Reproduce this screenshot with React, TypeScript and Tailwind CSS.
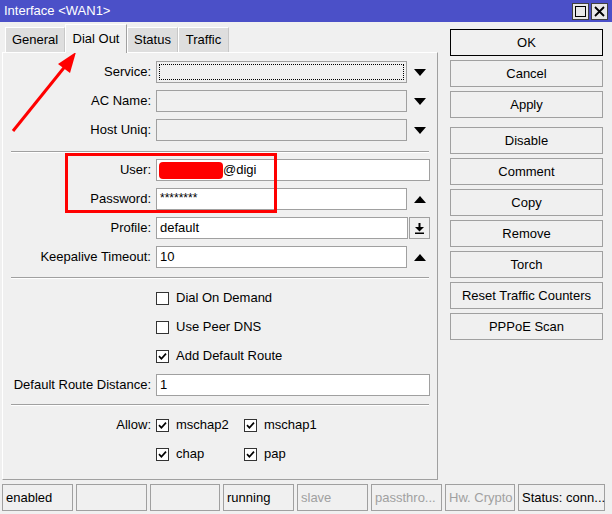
import React from 'react';

function Triangle({ up }: { up?: boolean }) {
  return up ? (
    <div className="h-0 w-0 border-x-[6px] border-b-[7px] border-x-transparent border-b-black" />
  ) : (
    <div className="h-0 w-0 border-x-[6px] border-t-[7px] border-x-transparent border-t-black" />
  );
}

function Check({ checked }: { checked?: boolean }) {
  return (
    <div className="flex h-[13px] w-[13px] shrink-0 items-center justify-center border border-[#333333] bg-white">
      {checked && (
        <svg width="9" height="9" viewBox="0 0 9 9">
          <path d="M1 4.2 L3.4 6.8 L8 1.6" fill="none" stroke="black" strokeWidth="1.7" />
        </svg>
      )}
    </div>
  );
}

function Row({ label, children }: { label?: string; children: React.ReactNode }) {
  return (
    <div className="flex h-[22px] items-center">
      <div className="w-[148px] shrink-0 whitespace-nowrap text-right">{label}</div>
      <div className="ml-[5px] flex items-center">{children}</div>
    </div>
  );
}

function Separator() {
  return <div className="ml-[8px] h-[2px] w-[418px] border-t border-b border-t-[#a0a0a0] border-b-white" />;
}

function CheckItem({ label, checked, w }: { label: string; checked?: boolean; w?: string }) {
  return (
    <div className={`flex items-center gap-[7px] ${w ?? ''}`}>
      <Check checked={checked} />
      <span>{label}</span>
    </div>
  );
}

const buttons = [
  'OK',
  'Cancel',
  'Apply',
  'Disable',
  'Comment',
  'Copy',
  'Remove',
  'Torch',
  'Reset Traffic Counters',
  'PPPoE Scan',
];

const statusCells = [
  { text: 'enabled', w: 'w-[71px]', tone: 'text-black' },
  { text: '', w: 'w-[71px]', tone: 'text-black' },
  { text: '', w: 'w-[70px]', tone: 'text-black' },
  { text: 'running', w: 'w-[71px]', tone: 'text-black' },
  { text: 'slave', w: 'w-[71px]', tone: 'text-[#a0a0a0]' },
  { text: 'passthro...', w: 'w-[71px]', tone: 'text-[#a0a0a0]' },
  { text: 'Hw. Crypto', w: 'w-[70px]', tone: 'text-[#a0a0a0]' },
  { text: 'Status: conn...', w: 'w-[87px]', tone: 'text-black' },
];

export default function App() {
  return (
    <div className="relative h-[514px] w-[612px] overflow-hidden bg-[#f0f0f0] font-['Liberation_Sans',Arial,sans-serif] text-[13px] leading-[16px] text-black">
      {/* title bar */}
      <div className="flex h-[22px] items-center bg-[#4b50c8] pl-[4px] pr-[4px]">
        <span className="text-white">{'Interface <WAN1>'}</span>
        <div className="ml-auto flex gap-[2px]">
          <div className="flex h-[17px] w-[17px] items-center justify-center border border-[#404040] bg-[#e8e8e8]">
            <div className="h-[11px] w-[11px] border-[1.5px] border-black" />
          </div>
          <div className="flex h-[17px] w-[17px] items-center justify-center border border-[#404040] bg-[#e8e8e8]">
            <svg width="11" height="11" viewBox="0 0 11 11">
              <path d="M1 1 L10 10 M10 1 L1 10" stroke="black" strokeWidth="1.8" />
            </svg>
          </div>
        </div>
      </div>

      <div className="flex">
        {/* left: tabs + panel */}
        <div className="ml-[2px] w-[436px]">
          <div className="ml-[3px] mt-[2px] flex h-[28px] items-end">
            <div className="flex h-[25px] w-[60px] items-center justify-center border border-b-0 border-white border-r-[#c8c8c8] bg-[#dedede]">
              General
            </div>
            <div className="relative z-10 -mb-[1px] flex h-[29px] w-[62px] items-center justify-center border border-b-0 border-white border-r-[#a0a0a0] bg-[#f0f0f0]">
              Dial Out
            </div>
            <div className="flex h-[25px] w-[51px] items-center justify-center border border-b-0 border-white border-r-[#c8c8c8] bg-[#dedede]">
              Status
            </div>
            <div className="flex h-[25px] w-[51px] items-center justify-center border border-b-0 border-white border-r-[#c8c8c8] bg-[#dedede]">
              Traffic
            </div>
          </div>

          <div className="h-[428px] border border-white border-b-[#a0a0a0] border-r-[#a0a0a0] pt-[8px]">
            <div className="flex flex-col gap-[7px]">
              <Row label="Service:">
                <div className="h-[22px] w-[251px] border border-[#a0a0a0] bg-[#f0f0f0] p-[2px]">
                  <div className="h-full w-full border border-dotted border-black" />
                </div>
                <div className="ml-[7px]">
                  <Triangle />
                </div>
              </Row>
              <Row label="AC Name:">
                <div className="h-[22px] w-[251px] border border-[#a0a0a0] bg-[#f0f0f0]" />
                <div className="ml-[7px]">
                  <Triangle />
                </div>
              </Row>
              <Row label="Host Uniq:">
                <div className="h-[22px] w-[251px] border border-[#a0a0a0] bg-[#f0f0f0]" />
                <div className="ml-[7px]">
                  <Triangle />
                </div>
              </Row>
            </div>

            <div className="mb-[6px] mt-[10px]">
              <Separator />
            </div>

            <div className="flex flex-col gap-[7px]">
              <Row label="User:">
                <div className="flex h-[22px] w-[274px] items-center border border-[#a0a0a0] bg-white pl-[2px]">
                  <div className="h-[17px] w-[64px] rounded-[4px] bg-[#ff0000]" />
                  <span>@digi</span>
                </div>
              </Row>
              <Row label="Password:">
                <div className="flex h-[22px] w-[251px] items-start border border-[#a0a0a0] bg-white pl-[3px] pt-[1px]">
                  <span className="text-[12px]">********</span>
                </div>
                <div className="ml-[7px]">
                  <Triangle up />
                </div>
              </Row>
              <Row label="Profile:">
                <div className="flex h-[22px] w-[252px] items-center border border-[#a0a0a0] bg-white pl-[3px]">
                  default
                </div>
                <div className="ml-[1px] flex h-[22px] w-[21px] items-center justify-center border border-[#a0a0a0] bg-[#f0f0f0]">
                  <svg width="9" height="11" viewBox="0 0 9 11">
                    <rect x="3.5" y="0" width="2" height="4" fill="black" />
                    <path d="M0 4 L9 4 L4.5 8.5 Z" fill="black" />
                    <rect x="0" y="9.5" width="9" height="1.5" fill="black" />
                  </svg>
                </div>
              </Row>
              <Row label="Keepalive Timeout:">
                <div className="flex h-[22px] w-[251px] items-center border border-[#a0a0a0] bg-white pl-[3px]">
                  10
                </div>
                <div className="ml-[7px]">
                  <Triangle up />
                </div>
              </Row>
            </div>

            <div className="mb-[8px] mt-[9px]">
              <Separator />
            </div>

            <div className="flex flex-col gap-[7px]">
              <Row>
                <CheckItem label="Dial On Demand" />
              </Row>
              <Row>
                <CheckItem label="Use Peer DNS" />
              </Row>
              <Row>
                <CheckItem label="Add Default Route" checked />
              </Row>
              <Row label="Default Route Distance:">
                <div className="flex h-[22px] w-[274px] items-center border border-[#a0a0a0] bg-white pl-[3px]">
                  1
                </div>
              </Row>
            </div>

            <div className="mb-[8px] mt-[8px]">
              <Separator />
            </div>

            <div className="flex flex-col gap-[7px]">
              <Row label="Allow:">
                <CheckItem label="mschap2" checked w="w-[88px]" />
                <CheckItem label="mschap1" checked />
              </Row>
              <Row>
                <CheckItem label="chap" checked w="w-[88px]" />
                <CheckItem label="pap" checked />
              </Row>
            </div>
          </div>
        </div>

        {/* right: buttons */}
        <div className="ml-[12px] mt-[7px] flex w-[153px] flex-col">
          {buttons.map((b, i) => (
            <div
              key={b}
              className={`flex h-[27px] items-center justify-center border bg-[#f0f0f0] ${
                i === 0 ? 'border-black' : 'border-[#a0a0a0]'
              } ${i === 0 ? '' : i === 3 ? 'mt-[9px]' : 'mt-[4px]'}`}
            >
              {b}
            </div>
          ))}
        </div>
      </div>

      {/* status bar */}
      <div className="ml-[2px] mt-[4px] flex gap-[3px]">
        {statusCells.map((c, i) => (
          <div
            key={i}
            className={`flex h-[27px] items-center whitespace-nowrap border border-[#a0a0a0] pl-[3px] ${c.w} ${c.tone}`}
          >
            {c.text}
          </div>
        ))}
      </div>

      {/* red annotations */}
      <div className="absolute left-[65px] top-[153px] h-[60px] w-[212px] border-[3px] border-[#ff0000]" />
      <svg className="absolute left-0 top-0" width="100" height="140" viewBox="0 0 100 140">
        <line x1="13" y1="131" x2="67" y2="64" stroke="#ff0000" strokeWidth="3" />
        <path d="M76 52 L58 64 L70 73 Z" fill="#ff0000" />
      </svg>
    </div>
  );
}
